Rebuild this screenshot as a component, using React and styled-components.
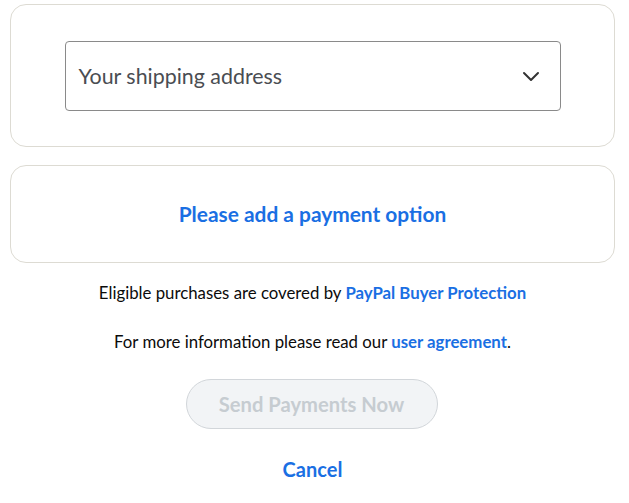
import React from 'react'
import styled, { createGlobalStyle } from 'styled-components'

const GlobalStyle = createGlobalStyle`
  body {
    margin: 0;
    background: #ffffff;
    font-family: 'Lato', 'Noto Sans', sans-serif;
    color: #001435;
  }
`

const Page = styled.div`
  width: 605px;
  margin-left: 10px;
  padding-top: 4px;
  display: flex;
  flex-direction: column;
  align-items: stretch;
`

const Card = styled.div`
  box-sizing: border-box;
  height: ${p => p.h}px;
  border: 1px solid #dddbd3;
  border-radius: 16px;
  display: flex;
  align-items: center;
  justify-content: center;
  margin-bottom: ${p => p.mb || 0}px;
`

const Select = styled.div`
  box-sizing: border-box;
  width: 496px;
  height: 70px;
  border: 1px solid #8a8a8a;
  border-radius: 4px;
  display: flex;
  align-items: center;
  justify-content: space-between;
  padding: 0 20px 0 13px;
  font-size: 21.4px;
  color: #4a4d52;
`

const Chevron = () => (
  <svg width="18" height="12" viewBox="0 0 18 12" fill="none">
    <path d="M2 3 L9 10 L16 3" stroke="#333" strokeWidth="2" strokeLinecap="round" strokeLinejoin="round" />
  </svg>
)

const AddPayment = styled.a`
  font-size: 20.9px;
  font-weight: 700;
  color: #1a6fe3;
  text-decoration: none;
  margin-bottom: 2px;
`

const Note = styled.p`
  margin: ${p => p.mt}px 0 0;
  text-align: center;
  font-size: 16.8px;
  line-height: 20px;
  color: #0b0b0b;
`

const Link = styled.a`
  color: #1a6fe3;
  font-weight: 700;
  text-decoration: none;
`

const SendButton = styled.button`
  align-self: center;
  margin: 27px 0 0 -2px;
  width: 252px;
  height: 50px;
  border: 1px solid #d2d6da;
  border-radius: 25px;
  background: #f2f4f6;
  color: #c6ccd1;
  font-family: inherit;
  font-size: 20.2px;
  font-weight: 700;
`

const Cancel = styled.a`
  align-self: center;
  margin-top: 29px;
  font-size: 20px;
  font-weight: 700;
  color: #1a6fe3;
  line-height: 22px;
`

export default function App() {
  return (
    <>
      <GlobalStyle />
      <Page>
        <Card h={143} mb={18}>
          <Select>
            <span>Your shipping address</span>
            <Chevron />
          </Select>
        </Card>
        <Card h={98}>
          <AddPayment>Please add a payment option</AddPayment>
        </Card>
        <Note mt={20}>
          Eligible purchases are covered by <Link>PayPal Buyer Protection</Link>
        </Note>
        <Note mt={29}>
          For more information please read our <Link>user agreement</Link>.
        </Note>
        <SendButton>Send Payments Now</SendButton>
        <Cancel>Cancel</Cancel>
      </Page>
    </>
  )
}
